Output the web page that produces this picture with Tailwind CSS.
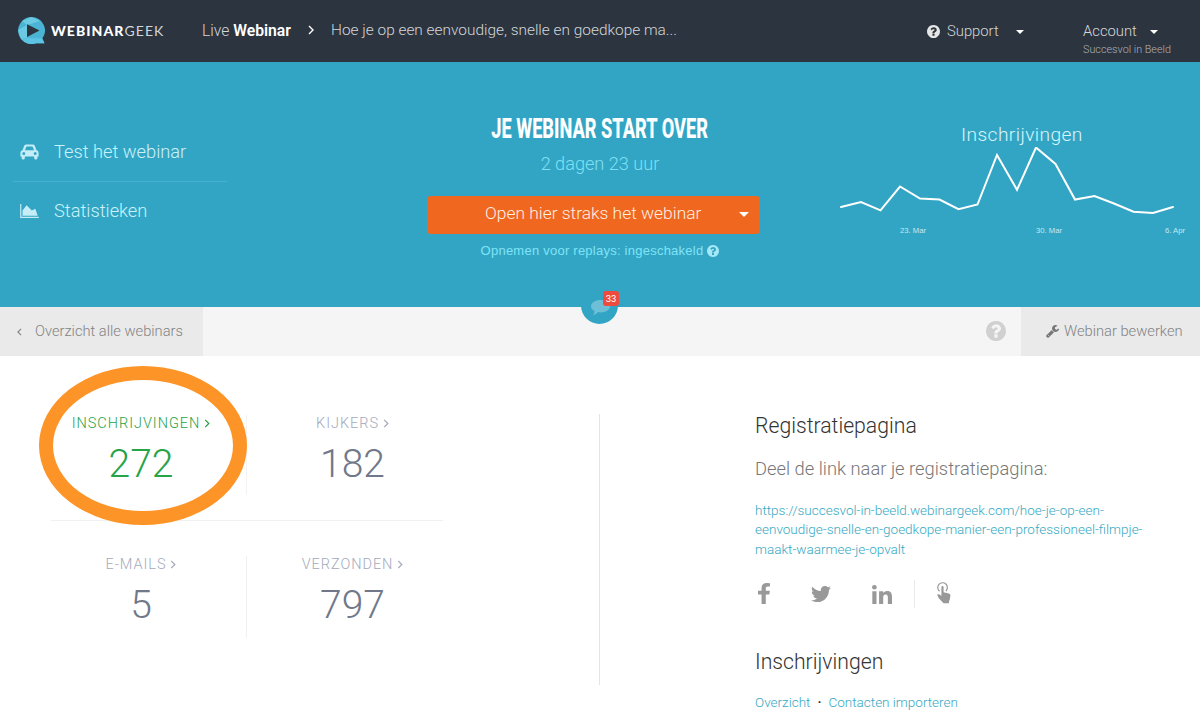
<!DOCTYPE html>
<html lang="nl">

<head>
    <meta charset="UTF-8" />
    <meta name="viewport" content="width=device-width, initial-scale=1.0" />
    <title>WebinarGeek</title>
    <script src="https://cdn.jsdelivr.net/npm/@tailwindcss/browser@4"></script>
</head>

<body class="bg-white font-['Roboto',sans-serif] font-light overflow-hidden h-[723px] whitespace-nowrap">

    <!-- icons used more than once -->
    <svg class="hidden">
        <symbol id="question" viewBox="128 128 1536 1536">
            <path d="M1024 1376v-192q0-14-9-23t-23-9h-192q-14 0-23 9t-9 23v192q0 14 9 23t23 9h192q14 0 23-9t9-23zm256-672q0-88-55.500-163t-138.500-116-170-41q-243 0-371 213-15 24 8 42l132 100q7 6 19 6 16 0 25-12 53-68 86-92 34-24 86-24 48 0 85.500 26t37.500 59q0 38-20 61t-68 45q-63 28-115.500 86.500t-52.500 125.500v36q0 14 9 23t23 9h192q14 0 23-9t9-23q0-19 21.500-49.500t54.500-49.500q32-18 49-28.500t46-35 44.500-48 28-60.500 12.500-81zm384 192q0 209-103 385.500t-279.500 279.500-385.500 103-385.500-103-279.500-279.500-103-385.500 103-385.500 279.500-279.500 385.500-103 385.500 103 279.500 279.500 103 385.500z" />
        </symbol>
        <symbol id="angle" viewBox="0 0 6 10">
            <path d="M1 1l4 4-4 4" fill="none" stroke="currentColor" stroke-width="1.4" />
        </symbol>
        <symbol id="caret" viewBox="0 0 8 4">
            <path d="M0 0h8L4 4z" />
        </symbol>
    </svg>

    <header class="flex h-[62px] bg-[#2c343f] text-[#d3d6d9]">
        <div class="flex items-center pl-[18px] w-[202px] h-[61px]">
            <svg class="w-[27px] h-[27px]" viewBox="0 0 27 27">
                <path d="M13.500 0a13.500 13.500 0 1 0 4.700 26.200H26.500L24.300 21.500A13.500 13.500 0 0 0 13.500 0z" fill="#4bb3d3" />
                <path d="M4 4L13.500 0 22 4 9 8zM0 13l9-5v13l-6 1z" fill="#6bcae3" />
                <path d="M9 21l15.300.5 2.200 4.700h-8.300A13.500 13.500 0 0 1 3 22z" fill="#5cc3e4" />
                <path d="M9 7.300l12.500 6.200L9 20z" fill="#2c343f" />
            </svg>
            <span class="ml-[6px] font-['Lato',sans-serif] text-[14px] tracking-[1.050px] text-white"><b class="font-black">WEBINAR</b><span class="font-normal text-[#d3d6d9]">GEEK</span></span>
        </div>
        <div class="flex items-center h-[61px] text-[15.700px]">
            <span class="w-[90px]">Live <b class="font-semibold text-white">Webinar</b></span>
            <svg class="ml-[16px] -mt-[2px] w-[6px] h-[10px] text-white"><use href="#angle" /></svg>
            <span class="ml-[17px] text-[15.420px]">Hoe je op een eenvoudige, snelle en goedkope ma...</span>
        </div>
        <div class="ml-auto flex w-[273px] fill-white">
            <div class="flex items-center h-[62px]">
                <svg class="w-[13px] h-[13px] fill-[#e6e6e6]"><use href="#question" /></svg>
                <span class="ml-[7px] w-[52px] text-[14.800px]">Support</span>
                <svg class="ml-[17px] mt-[2px] w-[8px] h-[4px]"><use href="#caret" /></svg>
            </div>
            <div class="ml-[59px] pt-[20px]">
                <div class="flex items-center h-[22px]">
                    <span class="w-[54px] text-[14.800px]">Account</span>
                    <svg class="ml-[13px] mt-[2px] w-[8px] h-[4px]"><use href="#caret" /></svg>
                </div>
                <div class="text-[10.800px] leading-[15px] text-[#aeb2b7]">Succesvol in Beeld</div>
            </div>
        </div>
    </header>

    <section class="relative flex h-[245px] bg-[#33a5c4]">
        <nav class="ml-[13px] mt-[61px] w-[214px] text-[18.250px] text-[#c9f2fb]">
            <a class="flex items-center h-[59px] pl-[7px] border-b border-[#48b1cf]">
                <svg class="w-[19px] h-[16px] fill-[#c4edf8]" viewBox="0 0 19 16">
                    <path fill-rule="evenodd" d="M2.500 6.300L4.200 1.800Q4.800.4 6.300.4h6.400q1.500 0 2.100 1.400l1.700 4.500Q18.600 6.600 18.600 9v3.600h-1.200v1.300a1.600 1.600 0 0 1-3.200 0v-1.300H4.800v1.300a1.600 1.600 0 0 1-3.200 0v-1.300H.4V9q0-2.400 2.100-2.700zM5 6.200h9L12.800 3Q12.600 2.600 12.200 2.600H6.800Q6.400 2.600 6.200 3zM3.800 7.900a1.500 1.500 0 1 0 0 3 1.500 1.500 0 0 0 0-3zm11.400 0a1.500 1.500 0 1 0 0 3 1.500 1.500 0 0 0 0-3z" />
                </svg>
                <span class="ml-[15px]">Test het webinar</span>
            </a>
            <a class="flex items-center h-[58px] pl-[7px]">
                <svg class="w-[19px] h-[14px] fill-[#c4edf8]" viewBox="0 0 2048 1536">
                    <path d="M2048 1408v128H0V0h128v1408zM256 1280V704l448-576 576 576 384-192 256 768z" />
                </svg>
                <span class="ml-[15px]">Statistieken</span>
            </a>
        </nav>

        <div class="ml-[200px] w-[333px] pt-[50px] flex flex-col items-center">
            <h1 class="ml-[12px] h-[34px] leading-[34px] text-[28px] font-extrabold text-white scale-x-[.65]">JE WEBINAR START OVER</h1>
            <p class="ml-[13px] h-[36px] leading-[36px] text-[18.150px] text-[#7fe0f5]">2 dagen 23 uur</p>
            <button class="mt-[14px] flex items-center w-[333px] h-[38px] rounded-[4px] bg-[#f0671f] text-[#fff0e4]">
                <span class="ml-[58px] w-[216px] -mt-[4px] text-[17.400px] text-left">Open hier straks het webinar</span>
                <svg class="ml-[38px] -mt-[2px] w-[10px] h-[5px] fill-white"><use href="#caret" /></svg>
            </button>
            <p class="ml-[13px] h-[34px] flex items-center text-[13px] tracking-[.240px] font-normal font-['Liberation_Sans',sans-serif] text-[#7fe3f7]">
                <span>Opnemen voor replays: ingeschakeld</span>
                <svg class="ml-[4px] w-[12px] h-[12px] fill-[#a4e9f8]"><use href="#question" /></svg>
            </p>
        </div>

        <div class="ml-[60px] w-[380px] pt-[60px]">
            <h2 class="ml-[141px] h-[25px] leading-[25px] text-[19.200px] tracking-[.4px] text-[#d9f6fc]">Inschrijvingen</h2>
            <svg class="w-[380px] h-[75px]" viewBox="820 147 380 75">
                <polyline points="841,207 861,202 880.5,210.3 900,186.5 920,198.500 939.5,199.600 958.500,209.200 977.5,204.500 997,155 1017,189.800 1036,147.500 1055.5,164 1075,199.600 1094.5,196 1114,203.500 1133.500,211.700 1153,213 1173,207" fill="none" stroke="#fff" stroke-width="2" stroke-linecap="round" />
            </svg>
            <div class="flex h-[18px] items-center font-normal font-['Liberation_Sans',sans-serif] text-[7.700px] text-[#c3e8f2]">
                <span class="ml-[80px] w-[136px]">23. Mar</span>
                <span class="w-[129px]">30. Mar</span>
                <span>6. Apr</span>
            </div>
        </div>

        <!-- chat bubble hanging over the toolbar -->
        <div class="absolute z-10 left-[581px] top-[225px] w-[37px] h-[37px] rounded-full bg-[#33a5c4]">
            <svg class="absolute left-[10px] top-[13px] w-[19px] h-[16px] fill-[#6cbfd6]" viewBox="0 0 19 16">
                <path d="M9.500 0C14.700 0 19 2.700 19 6.200s-4.300 6.200-9.500 6.200q-1.300 0-2.500-.3Q5 15 1.600 15.500q1.700-1.700 1.900-4.500Q0 9.100 0 6.200C0 2.700 4.300 0 9.500 0z" />
            </svg>
            <span class="absolute left-[22px] top-[4px] w-[16px] h-[15px] rounded-[3px] bg-[#ee4b3e] text-center text-[9.500px] leading-[15px] font-normal text-white">33</span>
        </div>
    </section>

    <div class="flex items-center h-[49px] bg-[#f5f5f5] text-[14.700px] text-[#838383]">
        <a class="flex items-center w-[203px] h-[49px] pl-[17px] bg-[#eaeaea]">
            <svg class="w-[5px] h-[8px] rotate-180"><use href="#angle" /></svg>
            <span class="ml-[13px]">Overzicht alle webinars</span>
        </a>
        <svg class="ml-auto -mt-[1px] w-[20px] h-[20px] fill-[#d0d0d0]"><use href="#question" /></svg>
        <a class="ml-[15px] flex items-center w-[179px] h-[49px] pl-[25px] bg-[#eaeaea]">
            <svg class="w-[13px] h-[13px] fill-[#777]" viewBox="64 128 1664 1664">
                <path d="M448 1472q0-26-19-45t-45-19-45 19-19 45 19 45 45 19 45-19 19-45zm644-420l-682 682q-37 37-90 37-52 0-91-37l-106-108q-38-36-38-90 0-53 38-91l681-681q39 98 114.500 173.500t173.500 114.500zm634-435q0 39-23 106-47 134-164.500 217.500t-258.500 83.500q-185 0-316.500-131.500t-131.500-316.500 131.500-316.500 316.500-131.500q58 0 121.500 16.500t107.500 46.500q16 11 16 28t-16 28l-293 169v224l193 107q5-3 79-48.500t135.500-81 70.500-35.500q15 0 23.500 10t8.500 25z" />
            </svg>
            <span class="ml-[5px]">Webinar bewerken</span>
        </a>
    </div>

    <main class="flex h-[367px]">
        <div class="relative w-[599px] pl-[36px] pt-[24px]">
            <div class="w-[422px] text-center text-[#70788a]">
                <div class="mx-[15px] h-[141px] pt-[35px] border-b border-[#f0f0f0]">
                    <div class="-mx-[15px] grid grid-cols-2 h-[80px]">
                        <div class="border-r border-[#f3f3f3] text-[#27a348]">
                            <p class="flex items-center justify-center h-[17px] text-[14.500px] tracking-[.960px]">INSCHRIJVINGEN<svg class="ml-[4px] w-[6px] h-[9px]"><use href="#angle" /></svg></p>
                            <p class="mt-[9px] text-[39px] leading-[46px]">272</p>
                        </div>
                        <div>
                            <p class="flex items-center justify-center h-[17px] text-[14.500px] tracking-[.960px] text-[#a3aabb]">KIJKERS<svg class="ml-[4px] w-[6px] h-[9px]"><use href="#angle" /></svg></p>
                            <p class="mt-[9px] text-[39px] leading-[46px]">182</p>
                        </div>
                    </div>
                </div>
                <div class="grid grid-cols-2 mt-[35px] h-[82px]">
                    <div class="border-r border-[#f0f0f0]">
                        <p class="flex items-center justify-center h-[17px] text-[14.500px] tracking-[.960px] text-[#a3aabb]">E-MAILS<svg class="ml-[4px] w-[6px] h-[9px]"><use href="#angle" /></svg></p>
                        <p class="mt-[9px] text-[39px] leading-[46px]">5</p>
                    </div>
                    <div>
                        <p class="flex items-center justify-center h-[17px] text-[14.500px] tracking-[.960px] text-[#a3aabb]">VERZONDEN<svg class="ml-[4px] w-[6px] h-[9px]"><use href="#angle" /></svg></p>
                        <p class="mt-[9px] text-[39px] leading-[46px]">797</p>
                    </div>
                </div>
            </div>
            <!-- highlight ring -->
            <div class="absolute left-[39px] top-[10px] w-[208px] h-[159px] rounded-[50%] border-[14.500px] border-[#fd9427]"></div>
        </div>

        <div class="mt-[58px] w-px h-[271px] bg-[#e4e4e4]"></div>

        <div class="ml-[155px] pt-[55px]">
            <h3 class="h-[30px] leading-[30px] text-[21.200px] text-[#333]">Registratiepagina</h3>
            <p class="mt-[15px] h-[26px] leading-[26px] text-[18.350px] text-[#777]">Deel de link naar je registratiepagina:</p>
            <a class="mt-[19px] block text-[13.500px] leading-[19.300px] text-[#37a8c3]">https://succesvol-in-beeld.webinargeek.com/hoe-je-op-een-<br>eenvoudige-snelle-en-goedkope-manier-een-professioneel-filmpje-<br>maakt-waarmee-je-opvalt</a>
            <div class="mt-[21px] flex items-center h-[28px] fill-[#999]">
                <svg class="ml-[3px] w-[12px] h-[21px]" viewBox="479 0 864 1664" preserveAspectRatio="none">
                    <path d="M1343 12v264h-157q-86 0-116 36t-30 108v189h293l-39 296h-254v759h-306v-759h-255v-296h255v-218q0-186 104-288.500t277-102.500q147 0 228 12z" />
                </svg>
                <svg class="ml-[41px] mt-[1px] w-[20px] h-[20px]" viewBox="0 0 512 512">
                    <path d="M459.370 151.716c.325 4.548.325 9.097.325 13.645 0 138.720-105.583 298.558-298.558 298.558-59.452 0-114.680-17.219-161.137-47.106 8.447.974 16.568 1.299 25.340 1.299 49.055 0 94.213-16.568 130.274-44.832-46.132-.975-84.792-31.188-98.112-72.772 6.498.974 12.995 1.624 19.818 1.624 9.421 0 18.843-1.300 27.614-3.573-48.081-9.747-84.143-51.980-84.143-102.985v-1.299c13.969 7.797 30.214 12.670 47.431 13.319-28.264-18.843-46.781-51.005-46.781-87.391 0-19.492 5.197-37.360 14.294-52.954 51.655 63.675 129.300 105.258 216.365 109.807-1.624-7.797-2.599-15.918-2.599-24.040 0-57.828 46.782-104.934 104.934-104.934 30.213 0 57.502 12.670 76.670 33.137 23.715-4.548 46.456-13.320 66.599-25.340-7.798 24.366-24.366 44.833-46.132 57.827 21.117-2.273 41.584-8.122 60.426-16.243-14.292 20.791-32.161 39.308-52.628 54.253z" />
                </svg>
                <svg class="ml-[41px] mt-[1px] w-[20px] h-[19px]" viewBox="0 0 448 448" preserveAspectRatio="none">
                    <path d="M100.280 448H7.400V148.900h92.880zM53.790 108.100C24.090 108.100 0 83.500 0 53.800a53.790 53.790 0 0 1 107.580 0c0 29.700-24.100 54.300-53.790 54.300zM447.900 448h-92.680V302.400c0-34.700-.7-79.200-48.290-79.200-48.290 0-55.690 37.700-55.690 76.700V448h-92.780V148.900h89.080v40.800h1.300c12.400-23.500 42.690-48.300 87.880-48.300 94 0 111.280 61.900 111.280 142.300V448z" />
                </svg>
                <div class="ml-[22px] w-px h-[28px] bg-[#eaeaea]"></div>
                <svg class="ml-[21px] -mt-[1px] w-[16px] h-[22px]" viewBox="0 0 16 22">
                    <path d="M3.600 9.300A4.800 4.800 0 1 1 9.900 9" fill="none" stroke="#999" stroke-width="1.200" />
                    <path d="M5.400 5.300q0-1.200 1.100-1.200t1.100 1.200v4.900l5.300 1.200q1.600.4 1.500 2l-.6 4.100-.8 1.800v2H7.500L2.800 16.200 1.200 12.900q.8-1.300 2.400-.3l1.800 1.300z" />
                </svg>
            </div>
            <h3 class="mt-[39px] h-[30px] leading-[30px] text-[21.200px] text-[#333]">Inschrijvingen</h3>
            <p class="mt-[15px] h-[20px] leading-[20px] text-[13.500px] text-[#37a8c3]"><a>Overzicht</a><span class="mx-[7px] font-bold text-[#333]">·</span><a>Contacten importeren</a></p>
        </div>
    </main>
</body>

</html>
